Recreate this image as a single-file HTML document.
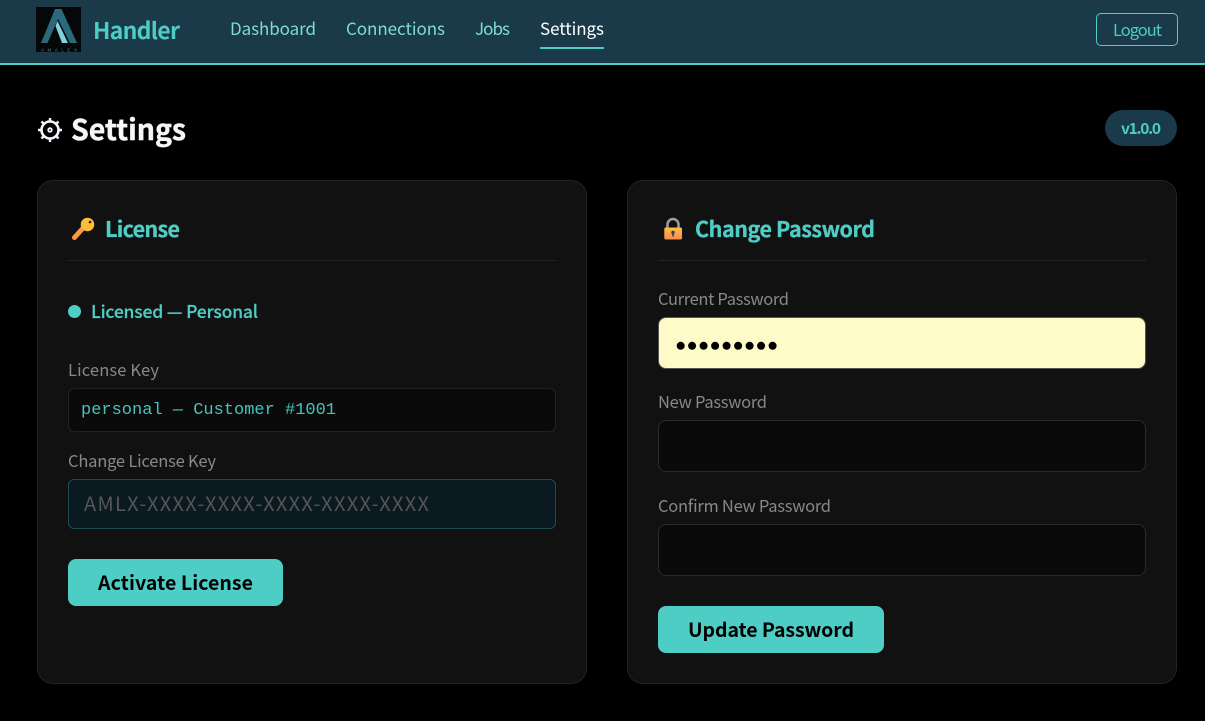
<!DOCTYPE html>
<html lang="en"><head><meta charset="utf-8"><title>Handler - Settings</title>
<style>
html,body{margin:0;padding:0;background:#000;width:1205px;height:721px;overflow:hidden}
.b{position:absolute;box-sizing:border-box}
svg{position:absolute;left:0;top:0}
text{font-family:"Noto Sans CJK SC","Liberation Sans",sans-serif}
.bold{font-weight:700}
.label{fill:#888;font-size:16.500px}
.title{fill:#4ecdc4;font-size:21.500px;font-weight:700}
.nav{fill:#7fdbd4;font-size:17px}
.btn{fill:#000;font-size:19.500px;font-weight:700}
</style></head><body>
<div class="b" style="left:0;top:0;width:1205px;height:65px;background:#1a3a4a;border-bottom:2px solid #4ecdc4"></div>
<div class="b" style="left:540px;top:47px;width:64px;height:2px;background:#4ecdc4"></div>
<div class="b" style="left:1096px;top:13px;width:82px;height:33px;border:1px solid #4ecdc4;border-radius:5px"></div>
<div class="b" style="left:1105px;top:110px;width:72px;height:36px;background:#1a3a4a;border-radius:18px"></div>
<div class="b" style="left:37px;top:180px;width:550px;height:504px;background:#111;border:1px solid #222;border-radius:16px"></div>
<div class="b" style="left:627px;top:180px;width:550px;height:504px;background:#111;border:1px solid #222;border-radius:16px"></div>
<div class="b" style="left:68px;top:260px;width:488px;height:1px;background:#222"></div>
<div class="b" style="left:658px;top:260px;width:488px;height:1px;background:#222"></div>
<div class="b" style="left:67.500px;top:304.500px;width:13px;height:13px;background:#4ecdc4;border-radius:50%"></div>
<div class="b" style="left:68px;top:388px;width:488px;height:44px;background:#0a0a0a;border:1px solid #222;border-radius:6px"></div>
<div class="b" style="left:68px;top:479px;width:488px;height:50px;background:#0b1a21;border:1px solid #1c4a50;border-radius:6px"></div>
<div class="b" style="left:68px;top:559px;width:215px;height:47px;background:#4ecdc4;border-radius:8px"></div>
<div class="b" style="left:658px;top:317px;width:488px;height:52px;background:#fffbc8;border:1px solid #555;border-radius:8px"></div>
<div class="b" style="left:658px;top:420px;width:488px;height:52px;background:#0a0a0a;border:1px solid #2a2a2a;border-radius:8px"></div>
<div class="b" style="left:658px;top:524px;width:488px;height:52px;background:#0a0a0a;border:1px solid #2a2a2a;border-radius:8px"></div>
<div class="b" style="left:658px;top:606px;width:226px;height:47px;background:#4ecdc4;border-radius:8px"></div>

<svg width="1205" height="721" viewBox="0 0 1205 721" xmlns="http://www.w3.org/2000/svg">
<!-- logo -->
<rect x="36" y="7" width="45" height="45" fill="#050708"/>
<path d="M55 9H61.500L77 43H70L58 19 47.500 43H41Z" fill="#2b6a7c"/>
<path d="M57.500 21L68 43H62L55.500 26Z" fill="#7fd3dc"/>
<text x="41" y="51.500" style="font-family:'Liberation Sans',sans-serif;font-size:4.500px" fill="#5f7c85" textLength="36" lengthAdjust="spacing">AMALEX</text>
<!-- gear -->
<g fill="none" stroke="#f2f6fa">
<circle cx="50" cy="130" r="8.500" stroke-width="2.600"/>
<circle cx="50" cy="130" r="1.800" stroke-width="1.800"/>
<path d="M50 118V122M50 138V142M38 130H42M58 130H62M41.500 121.500L44 124M56 136L58.500 138.500M58.500 121.500L56 124M44 136L41.500 138.500" stroke-width="2.400"/>
</g>
<!-- key -->
<defs>
<linearGradient id="kg" x1="0" y1="1" x2="1" y2="0"><stop offset="0" stop-color="#f4874e"/><stop offset=".6" stop-color="#fbb03a"/><stop offset="1" stop-color="#fdc72f"/></linearGradient>
<linearGradient id="lg" x1="0" y1="0" x2="0" y2="1"><stop offset="0" stop-color="#fdbf3e"/><stop offset="1" stop-color="#f58b4c"/></linearGradient>
</defs>
<path d="M74.500 237.500L84 227" stroke="#f79a45" stroke-width="5" stroke-linecap="round"/>
<circle cx="87.500" cy="224.500" r="6.800" fill="#fcbc35"/>
<circle cx="90" cy="222" r="1.300" fill="#222"/>
<!-- lock -->
<path d="M667.500 228V224.500a5.500 5.500 0 0 1 11 0V228" fill="none" stroke="#a29aa8" stroke-width="2.500"/>
<rect x="664.300" y="227.500" width="17.700" height="12" rx="1.500" fill="url(#lg)"/>
<circle cx="673" cy="232.500" r="1.700" fill="#3c3a5a"/>
<rect x="672.200" y="233" width="1.600" height="3.500" fill="#3c3a5a"/>
<!-- dots -->
<g fill="#000"><circle cx="680.700" cy="345.800" r="4"/><circle cx="692.100" cy="345.800" r="4"/><circle cx="703.600" cy="345.800" r="4"/><circle cx="715.100" cy="345.800" r="4"/><circle cx="726.600" cy="345.800" r="4"/><circle cx="738.100" cy="345.800" r="4"/><circle cx="749.600" cy="345.800" r="4"/><circle cx="761.100" cy="345.800" r="4"/><circle cx="772.600" cy="345.800" r="4"/></g>
<!-- text -->
<text x="93" y="39" class="bold" font-size="23" fill="#4ecdc4" textLength="87">Handler</text>
<text x="230" y="35" class="nav" textLength="86">Dashboard</text>
<text x="346" y="35" class="nav" textLength="99">Connections</text>
<text x="475" y="35" class="nav" textLength="35">Jobs</text>
<text x="540" y="35" class="nav" style="fill:#fff" textLength="64">Settings</text>
<text x="1113" y="36" font-size="16.500" fill="#4ecdc4" textLength="49">Logout</text>
<text x="71" y="140" class="bold" font-size="28.500" fill="#f4f6f8" stroke="#f4f6f8" stroke-width=".4" textLength="115">Settings</text>
<text x="1121" y="134" class="bold" font-size="15.500" fill="#4ecdc4" textLength="40">v1.0.0</text>
<text x="105" y="237" class="title" stroke="#4ecdc4" stroke-width=".3" textLength="75">License</text>
<text x="695" y="237" class="title" stroke="#4ecdc4" stroke-width=".3" textLength="180">Change Password</text>
<text x="91" y="318" class="bold" font-size="17.500" fill="#4ecdc4" style="font-weight:500" stroke="#4ecdc4" stroke-width=".2" textLength="167">Licensed — Personal</text>
<text x="68" y="376" class="label" textLength="91">License Key</text>
<text x="81" y="414" style="font-family:'Liberation Mono',monospace" font-size="17" fill="#45c4ba" textLength="255">personal — Customer #1001</text>
<text x="68" y="467" class="label" textLength="148">Change License Key</text>
<text x="84" y="511" font-size="20" fill="#555" textLength="345">AMLX-XXXX-XXXX-XXXX-XXXX-XXXX</text>
<text x="98" y="590" class="btn" textLength="155">Activate License</text>
<text x="658" y="305" class="label" textLength="131">Current Password</text>
<text x="658" y="408" class="label" textLength="109">New Password</text>
<text x="658" y="512" class="label" textLength="173">Confirm New Password</text>
<text x="688" y="637" class="btn" textLength="166">Update Password</text>
</svg>
</body></html>
